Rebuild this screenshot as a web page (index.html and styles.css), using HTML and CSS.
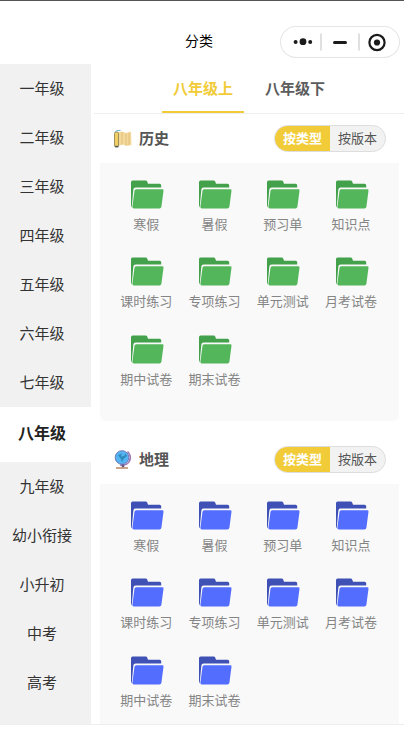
FILE: index.html
```
<!DOCTYPE html>
<html lang="zh-CN">
<head>
  <meta charset="UTF-8" />
  <meta name="viewport" content="width=device-width, initial-scale=1.0"/>
  <title>分类</title>
  <link rel="stylesheet" href="styles.css">
</head>
<body>
  <svg width="0" height="0" class="defs">
    <symbol id="folder" viewBox="0 0 33 29">
      <path class="folder-back" d="M0 2.2Q0 .5 1.6 .5H14.6Q15.8 .5 16.2 1.6L17 3.8H28.6Q30.2 3.8 30.2 5.3V14L8 27.5H1.2Q0 27 0 25Z"/>
      <path d="M4.6 7.6H33V10L31 28.5H.6L2.3 9.8Q2.5 7.6 4.6 7.6Z" fill="#f9f9f9"/>
      <path class="folder-front" d="M5.2 9.3H31.4Q32.7 9.3 32.5 10.7L30.4 26.8Q30.1 28.5 28.4 28.5H2.8Q1.2 28.5 1.4 26.8L3.5 10.8Q3.7 9.3 5.2 9.3Z"/>
    </symbol>
  </svg>

  <div class="app">
    <header class="navbar">
      <h1>分类</h1>
      <div class="capsule">
        <svg width="120" height="32" viewBox="0 0 120 32" fill="#1b1b1b">
          <circle cx="15.6" cy="16" r="2"/>
          <circle cx="23" cy="15.7" r="3.4"/>
          <circle cx="30.2" cy="16" r="2"/>
          <path d="M41 7.500V24.500M79 7.500V24.500" stroke="#d6d6d6" stroke-width="1.500"/>
          <path d="M54.500 16.500H65.500" stroke="#1b1b1b" stroke-width="3" stroke-linecap="round"/>
          <circle cx="97" cy="16.500" r="7.600" fill="none" stroke="#1b1b1b" stroke-width="2.200"/>
          <circle cx="97" cy="16.500" r="3.100"/>
        </svg>
      </div>
    </header>

    <div class="content">
      <nav class="sidebar">
        <div class="grade">一年级</div>
        <div class="grade">二年级</div>
        <div class="grade">三年级</div>
        <div class="grade">四年级</div>
        <div class="grade">五年级</div>
        <div class="grade">六年级</div>
        <div class="grade">七年级</div>
        <div class="grade active">八年级</div>
        <div class="grade">九年级</div>
        <div class="grade">幼小衔接</div>
        <div class="grade">小升初</div>
        <div class="grade">中考</div>
        <div class="grade">高考</div>
      </nav>

      <main class="main">
        <div class="tabs">
          <div class="tab active">八年级上</div>
          <div class="tab">八年级下</div>
        </div>

        <section class="card green">
          <div class="card-header">
            <svg class="subject-icon" width="20" height="20" viewBox="0 0 20 20">
              <path d="M5 3.500L9 2.500L13 4L18 2.500L18.500 16L14 17L10 15.500L5 17Z" fill="#f3d99c"/>
              <path d="M9 3V15.500M13 4.500V16.500M16 4V15.500" stroke="#e2bd78" fill="none"/>
              <rect x="1.500" y="3" width="4" height="15" rx="1.500" fill="#f0cf65" stroke="#8b7b4c" stroke-width=".8"/>
              <path d="M2 3Q3 1 7.500 1.500" stroke="#69b3cf" fill="none"/>
              <path d="M2 17.500H5.500" stroke="#54635b" stroke-width="1.500"/>
            </svg>
            <h2>历史</h2>
            <div class="switch"><span class="on">按类型</span><span>按版本</span></div>
          </div>
          <div class="grid">
            <div class="item"><svg><use href="#folder"/></svg>寒假</div>
            <div class="item"><svg><use href="#folder"/></svg>暑假</div>
            <div class="item"><svg><use href="#folder"/></svg>预习单</div>
            <div class="item"><svg><use href="#folder"/></svg>知识点</div>
            <div class="item"><svg><use href="#folder"/></svg>课时练习</div>
            <div class="item"><svg><use href="#folder"/></svg>专项练习</div>
            <div class="item"><svg><use href="#folder"/></svg>单元测试</div>
            <div class="item"><svg><use href="#folder"/></svg>月考试卷</div>
            <div class="item"><svg><use href="#folder"/></svg>期中试卷</div>
            <div class="item"><svg><use href="#folder"/></svg>期末试卷</div>
          </div>
        </section>

        <section class="card blue">
          <div class="card-header">
            <svg class="subject-icon" width="20" height="20" viewBox="0 0 20 20">
              <path d="M14.500 1.500Q19 6 16.500 11Q14 16 7 15" fill="none" stroke="#9a78b5" stroke-width="1.600"/>
              <path d="M10 14V18" stroke="#6a5587" stroke-width="2.500"/>
              <circle cx="9" cy="7.500" r="6.800" fill="#55b5f2" stroke="#6d78b8"/>
              <path d="M5 5L9 3.500L8 6.500L11 6L12.500 3.500L14 6L10.500 9L9 12L7.500 8.500Z" fill="#2f8bbd"/>
              <path d="M3 18H15" stroke="#c69b7e" stroke-width="1.800"/>
            </svg>
            <h2>地理</h2>
            <div class="switch"><span class="on">按类型</span><span>按版本</span></div>
          </div>
          <div class="grid">
            <div class="item"><svg><use href="#folder"/></svg>寒假</div>
            <div class="item"><svg><use href="#folder"/></svg>暑假</div>
            <div class="item"><svg><use href="#folder"/></svg>预习单</div>
            <div class="item"><svg><use href="#folder"/></svg>知识点</div>
            <div class="item"><svg><use href="#folder"/></svg>课时练习</div>
            <div class="item"><svg><use href="#folder"/></svg>专项练习</div>
            <div class="item"><svg><use href="#folder"/></svg>单元测试</div>
            <div class="item"><svg><use href="#folder"/></svg>月考试卷</div>
            <div class="item"><svg><use href="#folder"/></svg>期中试卷</div>
            <div class="item"><svg><use href="#folder"/></svg>期末试卷</div>
          </div>
        </section>
      </main>
    </div>
  </div>
</body>
</html>
```

FILE: styles.css
```
:root {
  --primary: #f1cb38;
  --text-color: #333;
  --gray-bg: #f1f1f1;
  --card-bg: #f9f9f9;
}

* {
  box-sizing: border-box;
}

body {
  margin: 0;
  font-family: "Noto Sans CJK SC", sans-serif;
  background-color: #fff;
  color: var(--text-color);
}

.defs {
  display: block;
}

.app {
  height: 731px;
  display: flex;
  flex-direction: column;
  overflow: hidden;
}

.navbar {
  flex: none;
  height: 64px;
  padding: 19px 4px 0 0;
  border-top: 1px solid #555;
  display: grid;
  grid-template-columns: 118px 1fr 120px;
  align-items: center;
}

.navbar h1 {
  grid-column: 2;
  margin: 0;
  padding-bottom: 4px;
  font-size: 14px;
  font-weight: 400;
  line-height: 20px;
  text-align: center;
  color: #000;
}

.capsule {
  height: 32px;
  border-radius: 16px;
  box-shadow: inset 0 0 0 1px #e5e5e5;
}

.capsule svg {
  display: block;
}

.content {
  flex: none;
  height: 661px;
  display: flex;
  overflow: hidden;
  border-bottom: 1px solid #eee;
}

.sidebar {
  flex: none;
  width: 91px;
  background-color: var(--gray-bg);
}

.grade {
  height: 49px;
  padding-right: 7px;
  font-size: 15px;
  line-height: 47px;
  text-align: center;
}

.grade.active {
  height: 55px;
  line-height: 51px;
  font-size: 16px;
  font-weight: 700;
  color: #222;
  background-color: #fff;
}

.main {
  flex: 1;
  min-width: 0;
}

.tabs {
  height: 50px;
  display: flex;
  justify-content: center;
  gap: 10px;
  margin-left: 3px;
  border-bottom: 1px solid #eee;
}

.tab {
  height: 49px;
  padding: 0 11px;
  font-size: 15px;
  font-weight: 700;
  line-height: 47px;
  color: #5c5c5c;
}

.tab.active {
  color: var(--primary);
  border-bottom: 2px solid var(--primary);
}

.card {
  margin: 0 5px 14px 9px;
}

.card-header {
  height: 49px;
  padding: 0 13px;
  display: flex;
  align-items: center;
}

.subject-icon {
  margin-right: 6px;
}

.card-header h2 {
  margin: 0;
  padding-bottom: 2px;
  font-size: 15px;
  line-height: 22px;
  color: #555;
}

.switch {
  margin-left: auto;
  width: 112px;
  height: 27px;
  display: flex;
  overflow: hidden;
  border: 1px solid #ddd;
  border-radius: 14px;
  background-color: #f2f2f2;
}

.switch span {
  flex: 1;
  font-size: 13px;
  line-height: 24px;
  text-align: center;
  color: #555;
}

.switch .on {
  font-weight: 700;
  color: #fff;
  background-color: var(--primary);
}

.grid {
  height: 258px;
  padding: 17px 12px 0;
  display: grid;
  grid-template-columns: repeat(4, 68.3px);
  grid-auto-rows: 77.3px;
  background-color: var(--card-bg);
  border-radius: 0 0 6px 6px;
}

.item {
  display: flex;
  flex-direction: column;
  align-items: center;
  font-size: 13px;
  line-height: 20px;
  white-space: nowrap;
  color: #858585;
}

.item svg {
  width: 33px;
  height: 29px;
  margin: 0 0 5px 2px;
}

.green {
  --back: #43a04b;
  --front: #54b65a;
}

.blue {
  --back: #3f51b5;
  --front: #536dfe;
}

.folder-back {
  fill: var(--back);
}

.folder-front {
  fill: var(--front);
}
```
